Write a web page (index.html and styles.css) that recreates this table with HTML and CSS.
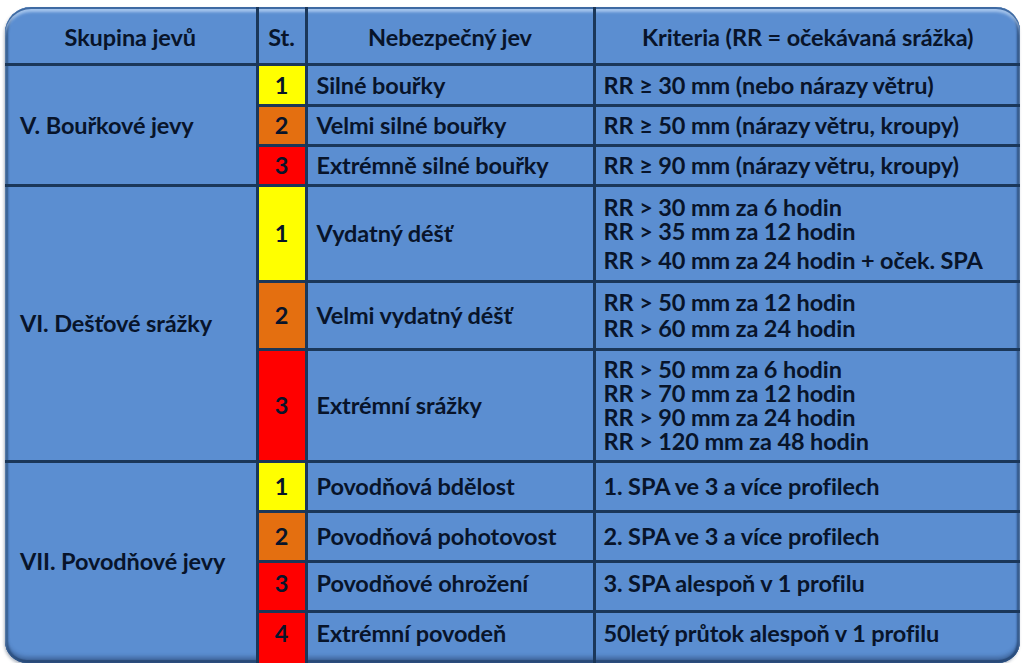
FILE: index.html
```html
<!DOCTYPE html>
<html lang="cs">
<head>
<meta charset="utf-8">
<title>Nebezpečné jevy</title>
<link rel="stylesheet" href="styles.css">
</head>
<body>
<div class="frame">
  <table class="warn">
    <colgroup>
      <col class="c-group"><col class="c-lvl"><col class="c-name"><col class="c-crit">
    </colgroup>
    <thead>
      <tr class="r-head">
        <th>Skupina jevů</th><th>St.</th><th>Nebezpečný jev</th><th>Kriteria (RR = očekávaná srážka)</th>
      </tr>
    </thead>
    <tbody>
      <tr class="r-a">
        <td rowspan="3" class="grp">V. Bouřkové jevy</td>
        <td class="lvl l1">1</td><td class="name">Silné bouřky</td><td class="crit">RR ≥ 30 mm (nebo nárazy větru)</td>
      </tr>
      <tr class="r-b">
        <td class="lvl l2">2</td><td class="name">Velmi silné bouřky</td><td class="crit">RR ≥ 50 mm (nárazy větru, kroupy)</td>
      </tr>
      <tr class="r-b">
        <td class="lvl l3">3</td><td class="name">Extrémně silné bouřky</td><td class="crit">RR ≥ 90 mm (nárazy větru, kroupy)</td>
      </tr>
      <tr class="r-c">
        <td rowspan="3" class="grp">VI. Dešťové srážky</td>
        <td class="lvl l1">1</td><td class="name">Vydatný déšť</td>
        <td class="crit multi"><div>RR &gt; 30 mm za 6 hodin</div><div>RR &gt; 35 mm za 12 hodin</div><div class="gap">RR &gt; 40 mm za 24 hodin + oček. SPA</div></td>
      </tr>
      <tr class="r-d">
        <td class="lvl l2">2</td><td class="name">Velmi vydatný déšť</td>
        <td class="crit multi two"><div>RR &gt; 50 mm za 12 hodin</div><div>RR &gt; 60 mm za 24 hodin</div></td>
      </tr>
      <tr class="r-e">
        <td class="lvl l3">3</td><td class="name">Extrémní srážky</td>
        <td class="crit multi tight"><div>RR &gt; 50 mm za 6 hodin</div><div>RR &gt; 70 mm za 12 hodin</div><div>RR &gt; 90 mm za 24 hodin</div><div>RR &gt; 120 mm za 48 hodin</div></td>
      </tr>
      <tr class="r-f">
        <td rowspan="4" class="grp grp-last">VII. Povodňové jevy</td>
        <td class="lvl l1">1</td><td class="name">Povodňová bdělost</td><td class="crit">1. SPA ve 3 a více profilech</td>
      </tr>
      <tr class="r-f">
        <td class="lvl l2">2</td><td class="name">Povodňová pohotovost</td><td class="crit">2. SPA ve 3 a více profilech</td>
      </tr>
      <tr class="r-f r-up">
        <td class="lvl l3">3</td><td class="name">Povodňové ohrožení</td><td class="crit">3. SPA alespoň v 1 profilu</td>
      </tr>
      <tr class="r-g">
        <td class="lvl l3">4</td><td class="name">Extrémní povodeň</td><td class="crit">50letý průtok alespoň v 1 profilu</td>
      </tr>
    </tbody>
  </table>
</div>
</body>
</html>
```

FILE: styles.css
```css
html, body {
  margin: 0;
  padding: 0;
  background: #ffffff;
  overflow: hidden;
}

body {
  font-family: "Lato", "Open Sans", sans-serif;
  font-weight: 700;
  color: #08142a;
}

.frame {
  margin: 7px 0 0 5px;
  width: 1015px;
  height: 656px;
  border-radius: 26px 24px 22px 22px;
  background: #5b8ed1;
  box-shadow:
    inset 0 2px 0 #3e6aa3,
    inset 0 5px 3px rgba(190, 215, 245, 0.75),
    inset 3px 0 2px #2f5688,
    inset -3px 0 2px #2b4f80,
    inset 0 -3px 1px #2a4a76,
    inset 0 -6px 4px rgba(30, 55, 95, 0.45),
    -1px 2px 3px rgba(40, 60, 90, 0.35);
}

.warn {
  width: 1015px;
  border-collapse: collapse;
  border-style: hidden;
  table-layout: fixed;
  font-size: 23.5px;
  line-height: 24px;
  letter-spacing: -0.1px;
}

.c-group { width: 252px; }
.c-lvl { width: 49px; }
.c-name { width: 288px; }
.c-crit { width: 426px; }

.warn th,
.warn td {
  border: 3px solid #1b3759;
  padding: 0;
  vertical-align: middle;
  background: transparent;
  white-space: nowrap;
}

.warn th {
  text-align: center;
  font-weight: 700;
  padding-top: 5px;
}

.r-head { height: 57px; }
.r-a { height: 41px; }
.r-b { height: 40px; }
.r-c { height: 96px; }
.r-d { height: 68px; }
.r-e { height: 112px; }
.r-f { height: 50px; }
.r-g { height: 57px; }

.grp {
  padding-left: 15px !important;
  text-align: left;
}

.grp-last { padding-bottom: 8px !important; }

.lvl {
  text-align: center;
}

.l1 { background: #ffff00 !important; }
.l2 { background: #e46f10 !important; }
.l3 { background: #ff0000 !important; }

.name {
  padding-left: 9px !important;
}

.crit {
  padding-left: 8px !important;
}

.multi .gap { margin-top: 5px; }
.two { line-height: 26px; }
.tight { line-height: 24px; }

.r-up td { padding-bottom: 6px !important; }
.r-g td { padding-bottom: 14px !important; }
```
